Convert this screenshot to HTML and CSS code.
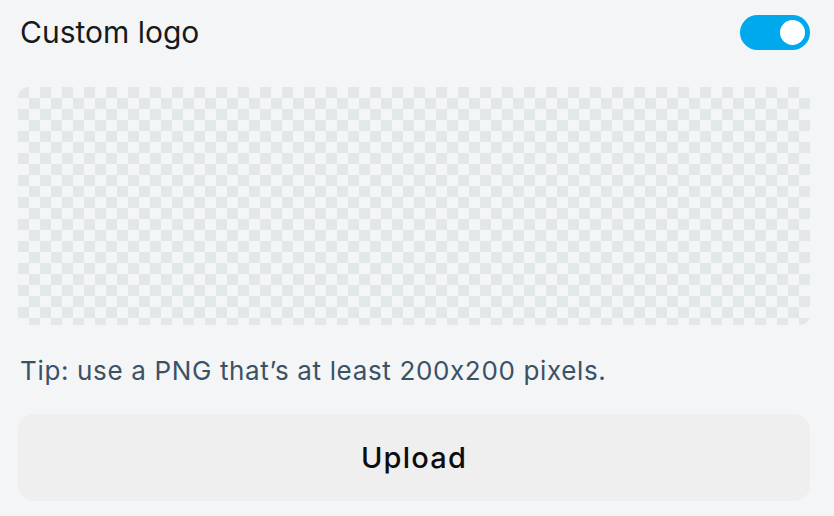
FILE: index.html
```html
<!DOCTYPE html>
<html lang="en">
<head>
<meta charset="utf-8">
<title>Custom logo</title>
<link rel="stylesheet" href="styles.css">
</head>
<body>
<div class="panel">
  <div class="header">
    <h2 class="title">Custom logo</h2>
    <button class="toggle" aria-pressed="true"><span class="knob"></span></button>
  </div>
  <div class="preview"></div>
  <p class="tip">Tip: use a PNG that’s at least 200x200 pixels.</p>
  <button class="upload">Upload</button>
</div>
</body>
</html>
```
FILE: styles.css
```css
html, body {
  margin: 0;
  padding: 0;
  background: #f4f5f7;
}
body {
  font-family: Inter, "Noto Sans", sans-serif;
  width: 834px;
  height: 516px;
  overflow: hidden;
}
.panel {
  padding: 15px 24px 0 18px;
  display: flex;
  flex-direction: column;
}
.header {
  display: flex;
  align-items: center;
  justify-content: space-between;
  height: 35px;
}
.title {
  margin: 0 0 0 2px;
  font-size: 30px;
  font-weight: 400;
  color: #161a1d;
  letter-spacing: 0px;
  line-height: 35px;
}
.toggle {
  width: 70px;
  height: 35px;
  border: none;
  border-radius: 18px;
  background: #00a9ec;
  padding: 0 5px;
  display: flex;
  align-items: center;
  justify-content: flex-end;
}
.knob {
  width: 25px;
  height: 25px;
  border-radius: 50%;
  background: #ffffff;
}
.preview {
  margin-top: 37px;
  height: 238px;
  border-radius: 10px;
  background: repeating-conic-gradient(#f3f5f6 0 25%, #e2e7e8 0 50%) 0 0 / 22px 22px;
}
.tip {
  margin: 31px 0 0 2px;
  font-size: 26px;
  line-height: 30px;
  color: #3b5265;
  letter-spacing: 0.65px;
}
.upload {
  margin-top: 28px;
  height: 87px;
  border: none;
  border-radius: 16px;
  background: #efefef;
  font-family: Inter, "Noto Sans", sans-serif;
  font-size: 29px;
  font-weight: 500;
  color: #0d0d0d;
  letter-spacing: 1.2px;
}
```
